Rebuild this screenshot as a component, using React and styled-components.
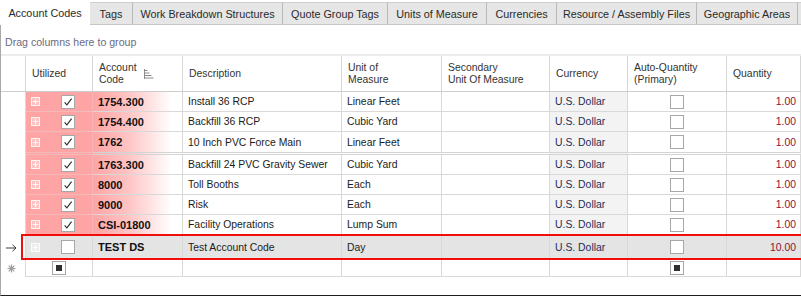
import React from "react";
import styled, { createGlobalStyle } from "styled-components";

const GlobalStyle = createGlobalStyle`
  html, body {
    margin: 0;
    padding: 0;
    background: #ffffff;
  }
  body {
    font-family: "Liberation Sans", Arial, sans-serif;
    font-size: 10.4px;
    color: #1b1b1b;
  }
`;

const tabs = [
  { label: "Account Codes", w: 90, active: true },
  { label: "Tags", w: 43 },
  { label: "Work Breakdown Structures", w: 150 },
  { label: "Quote Group Tags", w: 105 },
  { label: "Units of Measure", w: 99 },
  { label: "Currencies", w: 70 },
  { label: "Resource / Assembly Files", w: 140 },
  { label: "Geographic Areas", w: 101 },
  { label: "", w: 20 },
];

const W = {
  ind: 25,
  utilized: 67,
  code: 90,
  desc: 159,
  uom: 100,
  uom2: 108,
  cur: 78,
  auto: 99,
  qty: 74,
};

const rows = [
  { code: "1754.300", desc: "Install 36 RCP", uom: "Linear Feet", qty: "1.00" },
  { code: "1754.400", desc: "Backfill 36 RCP", uom: "Cubic Yard", qty: "1.00" },
  { code: "1762", desc: "10 Inch PVC Force Main", uom: "Linear Feet", qty: "1.00", sep: true },
  { code: "1763.300", desc: "Backfill 24 PVC Gravity Sewer", uom: "Cubic Yard", qty: "1.00" },
  { code: "8000", desc: "Toll Booths", uom: "Each", qty: "1.00" },
  { code: "9000", desc: "Risk", uom: "Each", qty: "1.00" },
  { code: "CSI-01800", desc: "Facility Operations", uom: "Lump Sum", qty: "1.00" },
  { code: "TEST DS", desc: "Test Account Code", uom: "Day", qty: "10.00", focused: true },
];

const Window = styled.div`
  width: 801px;
  height: 296px;
  overflow: hidden;
  display: flex;
  flex-direction: column;
`;

const TabBar = styled.div`
  display: flex;
  align-items: flex-end;
  height: 25px;
  flex-shrink: 0;
`;

const Tab = styled.div`
  width: ${(p) => p.$w}px;
  flex-shrink: 0;
  box-sizing: border-box;
  height: ${(p) => (p.$active ? 25 : 23)}px;
  display: flex;
  align-items: center;
  justify-content: center;
  padding-top: ${(p) => (p.$active ? 0 : 1)}px;
  white-space: nowrap;
  color: #2a2a2a;
  font-size: 10.8px;
  background: ${(p) => (p.$active ? "#ffffff" : "#e6e6e6")};
  border-top: ${(p) => (p.$active ? "none" : "1px solid #cfcfcf")};
  border-right: ${(p) => (p.$active ? "none" : "1px solid #b9b9b9")};
  border-bottom: ${(p) => (p.$active ? "none" : "1px solid #c6c6c6")};
`;

const Panel = styled.div`
  flex: 1;
  display: flex;
  flex-direction: column;
  border-left: 1px solid #a9a9a9;
  border-bottom: 1px solid #1e1e1e;
  background: #ffffff;
`;

const GroupPanel = styled.div`
  height: 31px;
  flex-shrink: 0;
  display: flex;
  align-items: center;
  padding: 4px 0 0 4px;
  box-sizing: border-box;
  color: #6a6a82;
  font-size: 10.6px;
  border-bottom: 2px solid #ececec;
`;

const HeaderRow = styled.div`
  display: flex;
  height: 36px;
  flex-shrink: 0;
  box-sizing: border-box;
  border-bottom: 1px solid #cdcdcd;
`;

const HeaderCell = styled.div`
  width: ${(p) => p.$w}px;
  flex-shrink: 0;
  box-sizing: border-box;
  display: flex;
  align-items: center;
  padding: 0 5px 0 6px;
  line-height: 12px;
  color: #333333;
  white-space: pre-line;
  border-right: 1px solid #d6d6d6;
`;

const SortIcon = styled.svg`
  margin-left: 7px;
  flex-shrink: 0;
`;

const Row = styled.div`
  display: flex;
  flex-shrink: 0;
  height: ${(p) => p.$h}px;
  position: relative;

  ${(p) =>
    p.$focused &&
    `
    &::after {
      content: "";
      position: absolute;
      left: 20px;
      right: -6px;
      top: -1px;
      bottom: 0;
      border: 2px solid #f20d0d;
      pointer-events: none;
    }
  `}
`;

const Cell = styled.div`
  width: ${(p) => p.$w}px;
  flex-shrink: 0;
  box-sizing: border-box;
  display: flex;
  align-items: center;
  padding: 0 5px;
  white-space: nowrap;
  overflow: hidden;
  border-right: 1px solid #d9d9d9;
  border-bottom: ${(p) => (p.$sep ? "3px double #d4d4d4" : "1px solid #d9d9d9")};
  background: ${(p) => (p.$focused ? "#e4e4e4" : "#ffffff")};
`;

const IndicatorCell = styled.div`
  width: ${W.ind}px;
  flex-shrink: 0;
  box-sizing: border-box;
  display: flex;
  align-items: center;
  justify-content: center;
  padding-right: 3px;
  border-right: 1px solid #d9d9d9;
  background: #ffffff;
`;

const UtilizedCell = styled(Cell)`
  padding: 0 0 0 5px;
  background: ${(p) => (p.$focused ? "#e4e4e4" : "#ffa4a4")};
  border-right-color: ${(p) => (p.$focused ? "#d9d9d9" : "#f3b5b5")};
  border-bottom-color: ${(p) => (p.$focused ? "#d9d9d9" : "#f4b9b9")};
`;

const CodeCell = styled(Cell)`
  font-weight: bold;
  font-size: 11px;
  color: #111111;
  background: ${(p) =>
    p.$focused
      ? "#e4e4e4"
      : "linear-gradient(90deg, #ffa4a4 0%, #ffc4c4 40%, #ffffff 88%)"};
`;

const CurrencyCell = styled(Cell)`
  color: #1f2c57;
  background: ${(p) => (p.$focused ? "#e4e4e4" : "#f3f3f3")};
`;

const CheckCell = styled(Cell)`
  justify-content: center;
`;

const QtyCell = styled(Cell)`
  justify-content: flex-end;
  padding-right: 4px;
  color: #8a1234;
`;

const NewRowCell = styled(Cell)`
  justify-content: ${(p) => (p.$center ? "center" : "flex-start")};
`;

const Box = styled.div`
  width: 14px;
  height: 14px;
  box-sizing: border-box;
  border: 1px solid #a7a7a7;
  background: #ffffff;
  display: flex;
  align-items: center;
  justify-content: center;
  margin-left: ${(p) => p.$ml || 0}px;
  flex-shrink: 0;
`;

const Indeterminate = styled.div`
  width: 6px;
  height: 6px;
  background: #2f2f2f;
`;

const ExpandIcon = () => (
  <svg width="9" height="9" viewBox="0 0 9 9">
    <rect x="0.5" y="0.5" width="8" height="8" fill="rgba(255,255,255,0.35)" stroke="rgba(255,255,255,0.85)" />
    <path d="M4.5 2 V7 M2 4.5 H7" stroke="rgba(255,255,255,0.95)" strokeWidth="1" />
  </svg>
);

const CheckMark = () => (
  <svg width="10" height="10" viewBox="0 0 10 10">
    <path d="M1.6 5.4 L3.9 7.8 L8.6 1.6" fill="none" stroke="#2a2a2a" strokeWidth="1.1" />
  </svg>
);

const ArrowIcon = () => (
  <svg width="11" height="8" viewBox="0 0 11 8">
    <path d="M0 4 H10 M6.5 0.8 L10 4 L6.5 7.2" fill="none" stroke="#3c3c3c" strokeWidth="1" />
  </svg>
);

const StarIcon = () => (
  <svg width="9" height="9" viewBox="0 0 9 9">
    <g stroke="#a0a0a0" strokeWidth="1.2">
      <path d="M4.5 0.5 V8.5 M0.5 4.5 H8.5 M1.7 1.7 L7.3 7.3 M7.3 1.7 L1.7 7.3" />
    </g>
    <circle cx="4.5" cy="4.5" r="2" fill="#a0a0a0" />
  </svg>
);

const DataRow = ({ r }) => {
  const f = r.focused;
  const h = r.sep ? 23 : f ? 25 : 20;
  return (
    <Row $h={h} $focused={f}>
      <IndicatorCell>{f && <ArrowIcon />}</IndicatorCell>
      <UtilizedCell $w={W.utilized} $focused={f} $sep={r.sep}>
        <ExpandIcon />
        <Box $ml={21}>{!f && <CheckMark />}</Box>
      </UtilizedCell>
      <CodeCell $w={W.code} $focused={f} $sep={r.sep}>
        {r.code}
      </CodeCell>
      <Cell $w={W.desc} $focused={f} $sep={r.sep}>
        {r.desc}
      </Cell>
      <Cell $w={W.uom} $focused={f} $sep={r.sep}>
        {r.uom}
      </Cell>
      <Cell $w={W.uom2} $focused={f} $sep={r.sep} />
      <CurrencyCell $w={W.cur} $focused={f} $sep={r.sep}>
        U.S. Dollar
      </CurrencyCell>
      <CheckCell $w={W.auto} $focused={f} $sep={r.sep}>
        <Box />
      </CheckCell>
      <QtyCell $w={W.qty} $focused={f} $sep={r.sep}>
        {r.qty}
      </QtyCell>
    </Row>
  );
};

const NewRow = () => (
  <Row $h={17}>
    <IndicatorCell>
      <StarIcon />
    </IndicatorCell>
    <NewRowCell $w={W.utilized} $center>
      <Box>
        <Indeterminate />
      </Box>
    </NewRowCell>
    <NewRowCell $w={W.code} />
    <NewRowCell $w={W.desc} />
    <NewRowCell $w={W.uom} />
    <NewRowCell $w={W.uom2} />
    <NewRowCell $w={W.cur} />
    <NewRowCell $w={W.auto} $center>
      <Box>
        <Indeterminate />
      </Box>
    </NewRowCell>
    <NewRowCell $w={W.qty} />
  </Row>
);

const App = () => {
  return (
    <Window>
      <GlobalStyle />
      <TabBar>
        {tabs.map((t, i) => (
          <Tab key={i} $w={t.w} $active={t.active}>
            {t.label}
          </Tab>
        ))}
      </TabBar>
      <Panel>
        <GroupPanel>Drag columns here to group</GroupPanel>
        <HeaderRow>
          <HeaderCell $w={W.ind} />
          <HeaderCell $w={W.utilized}>Utilized</HeaderCell>
          <HeaderCell $w={W.code}>
            {"Account\nCode"}
            <SortIcon width="10" height="10" viewBox="0 0 10 10">
              <path
                d="M0.5 0 V10 M0.5 1.5 H3.5 M0.5 4 H5.5 M0.5 6.5 H7.5 M0.5 9 H9.5"
                stroke="#8c8c8c"
                strokeWidth="1"
              />
            </SortIcon>
          </HeaderCell>
          <HeaderCell $w={W.desc}>Description</HeaderCell>
          <HeaderCell $w={W.uom}>{"Unit of\nMeasure"}</HeaderCell>
          <HeaderCell $w={W.uom2}>{"Secondary\nUnit Of Measure"}</HeaderCell>
          <HeaderCell $w={W.cur}>Currency</HeaderCell>
          <HeaderCell $w={W.auto}>{"Auto-Quantity\n(Primary)"}</HeaderCell>
          <HeaderCell $w={W.qty}>Quantity</HeaderCell>
        </HeaderRow>
        {rows.map((r) => (
          <DataRow key={r.code} r={r} />
        ))}
        <NewRow />
      </Panel>
    </Window>
  );
};

export default App;
